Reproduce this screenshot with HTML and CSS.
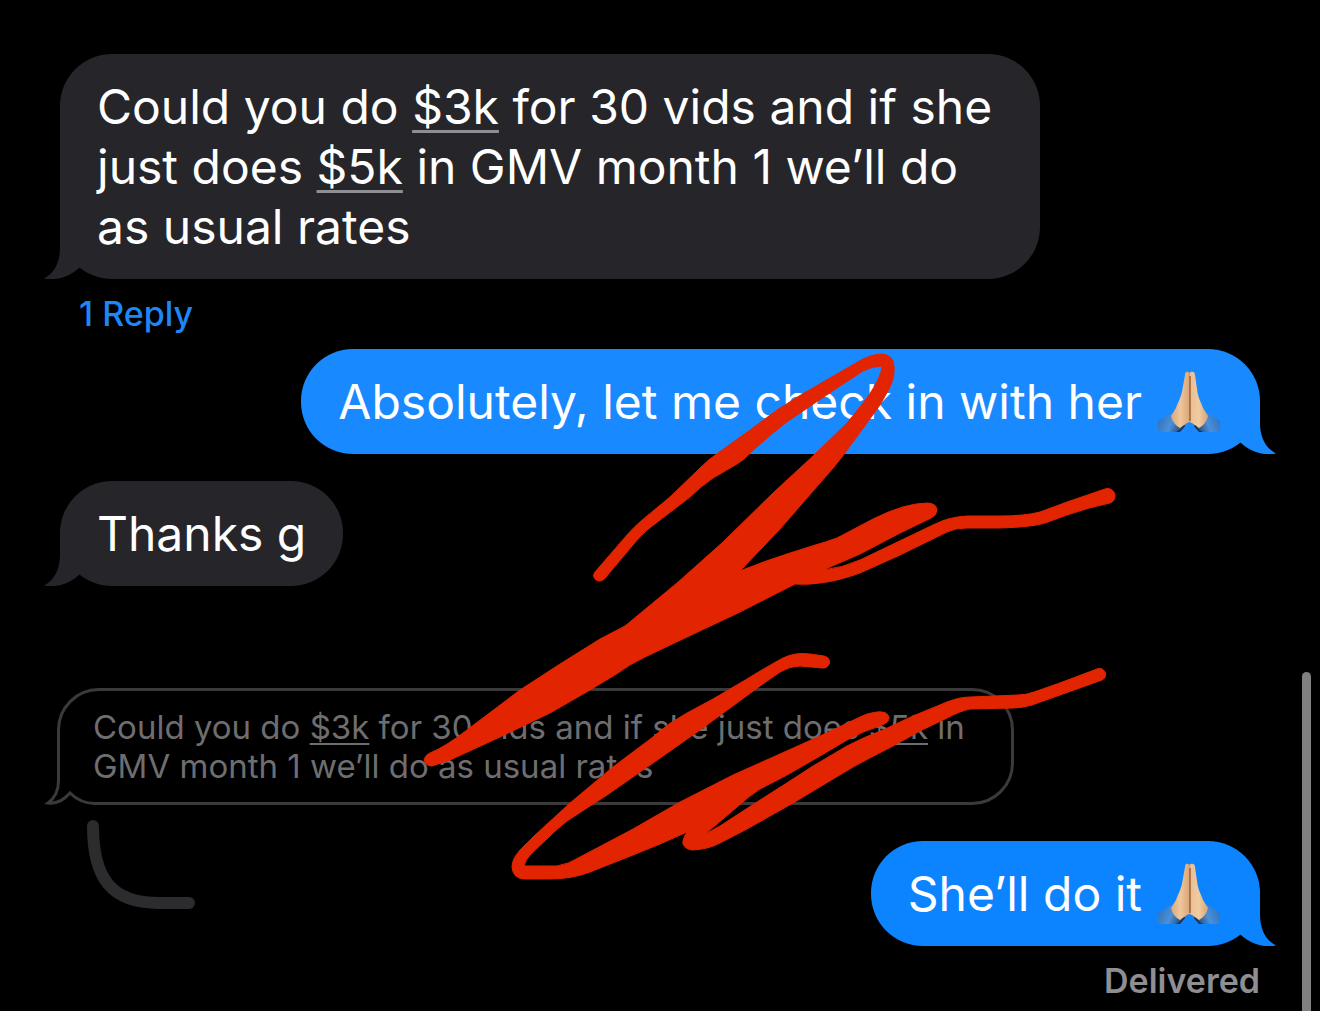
FILE: index.html
```html
<!DOCTYPE html>
<html lang="en">
<head>
    <meta charset="UTF-8">
    <meta name="viewport" content="width=device-width, initial-scale=1.0">
    <title>Messages</title>
    <link rel="stylesheet" href="styles.css">
</head>
<body>
    <!-- Shared shapes -->
    <svg class="symbols" aria-hidden="true">
        <defs>
            <linearGradient id="skin-left" x1="0" x2="1" y1="0" y2="0">
                <stop offset="0" stop-color="#d9a87c"/>
                <stop offset="0.5" stop-color="#efc69c"/>
                <stop offset="1" stop-color="#dba678"/>
            </linearGradient>
            <linearGradient id="skin-right" x1="0" x2="1" y1="0" y2="0">
                <stop offset="0" stop-color="#e9bd92"/>
                <stop offset="0.5" stop-color="#f1cba2"/>
                <stop offset="1" stop-color="#d9a577"/>
            </linearGradient>
            <linearGradient id="cuff-left" x1="0" x2="1" y1="0" y2="0.3">
                <stop offset="0" stop-color="#2d6db8"/>
                <stop offset="0.6" stop-color="#4b90da"/>
                <stop offset="1" stop-color="#26507f"/>
            </linearGradient>
            <linearGradient id="cuff-right" x1="1" x2="0" y1="0" y2="0.3">
                <stop offset="0" stop-color="#2d6db8"/>
                <stop offset="0.6" stop-color="#4b90da"/>
                <stop offset="1" stop-color="#26507f"/>
            </linearGradient>
        </defs>
        <symbol id="tail" viewBox="0 0 40 56">
            <path d="M16 0V25C16 38 11 50 0 55.500C12 58 25 54 35 45L40 40V0Z"/>
        </symbol>
        <symbol id="pray" viewBox="0 0 62 62">
            <path d="M0 50C5 47 10 44 14 42L27 55C25 58 23 60 20 61H0Z" fill="url(#cuff-left)"/>
            <path d="M62 50C57 47 53 44 49 42L36 55C38 58 40 60 43 61H62Z" fill="url(#cuff-right)"/>
            <path d="M18 61C22 59 24 57 26 53L27 55L22 61Z" fill="#1c3554"/>
            <path d="M45 61C41 59 39 57 37 53L36 55L41 61Z" fill="#1c3554"/>
            <path d="M31.500 2C30 0 27 0 27 4L24.500 18C23 27 20 31 18 37L13 45C14 50 18 55 22 57C25 55 28 52 31.500 51Z" fill="url(#skin-left)"/>
            <path d="M31.500 2C33 0 37 0 37 4L39 18C40 27 43 31 45 37L50 45C49 50 45 55 41 57C38 55 35 52 31.500 51Z" fill="url(#skin-right)"/>
            <path d="M32 5V50" stroke="#9a6238" stroke-width="1.500" fill="none"/>
        </symbol>
    </svg>

    <main class="chat">
        <div class="bubble received">
            Could you do <a href="#">$3k</a> for 30 vids and if she just does <a href="#">$5k</a> in GMV month 1 we’ll do as usual rates
            <svg class="tail" aria-hidden="true"><use href="#tail"/></svg>
        </div>
        <button class="replies" type="button">1 Reply</button>

        <div class="bubble sent">
            Absolutely, let me check in with her
            <svg class="emoji" role="img" aria-label="Folded hands"><use href="#pray"/></svg>
            <svg class="tail" aria-hidden="true"><use href="#tail"/></svg>
        </div>

        <div class="bubble received thanks">
            Thanks g
            <svg class="tail" aria-hidden="true"><use href="#tail"/></svg>
        </div>

        <blockquote class="quote">
            <svg class="quote-tail" viewBox="0 0 56 56" aria-hidden="true">
                <path class="cover" d="M12 0H56V56H12Z"/>
                <path class="line" d="M15.500 0V32C15.500 43 12 49 5 54C13 55 20 52 27 44C34 51 42 54.500 52 54.500H56"/>
            </svg>
            <p>Could you do <a href="#">$3k</a> for 30 vids and if she just does <a href="#">$5k</a> in GMV month 1 we’ll do as usual rates</p>
        </blockquote>

        <div class="thread">
            <svg class="hook" viewBox="0 0 108 90" aria-hidden="true">
                <path d="M6 6C6 58 24 83 72 83H102"/>
            </svg>
            <div class="bubble sent latest">
                She’ll do it
                <svg class="emoji" role="img" aria-label="Folded hands"><use href="#pray"/></svg>
                <svg class="tail" aria-hidden="true"><use href="#tail"/></svg>
            </div>
        </div>
        <p class="status">Delivered</p>

        <!-- Red marker scribble over the messages -->
        <svg class="marker" viewBox="0 0 1320 1011" aria-hidden="true">
            <path d="M595 572L627 535Q633 528 641 521L670 497L700 468Q709 459 718 453L750 430L777 410Q800 395 823 382L856 363Q870 354 882 354Q894 355 894 367Q895 377 889 389L880 405L845 453Q833 469 820 483L780 529L740 571Q765 561 787 554L812 546Q826 542 837 538L873 519Q905 503 928 503Q937 504 937 510Q937 515 931 518L900 533L860 554L823 570Q842 568 860 560L933 525Q948 517 967 516L1000 516Q1025 516 1040 512L1067 502L1105 489C1115 486 1119 500 1110 503Q1090 507 1067 515L1045 523Q1033 527 1000 528L967 528Q955 528 947 532L900 555L860 573Q838 581 820 583Q807 585 795 584L740 612L687 637L645 657Q630 664 618 673L590 690L550 713L500 737L450 760L432 766C424 766 421 757 430 753Q445 747 467 730L520 690L560 664L600 639L625 626L677 583L723 542L773 493L813 456L847 423L867 398Q882 376 882 366Q873 366 863 371L837 388L803 411Q787 421 773 433L750 453Q744 460 737 464L713 478Q700 487 690 497L647 530Q640 536 632 546L606 577C600 586 590 578 595 572Z"/>
            <path d="M824 656L810 654Q795 652 783 658Q768 666 747 679L713 699L687 713Q668 723 653 737L613 767L570 803L533 837L520 850Q512 859 512 867Q513 879 525 879L550 879Q572 879 590 872L633 855L660 844L687 832Q682 840 683 844Q686 850 693 850Q709 849 720 843L747 829L793 803L813 791L853 767Q873 756 893 746L920 731L947 718Q960 711 970 709L1013 708Q1022 708 1032 705L1102 680C1109 677 1105 666 1097 669L1057 684L1034 692Q1026 695 1018 695L970 697Q960 697 947 702L913 716L883 730Q864 737 847 746L813 766L793 779L757 802L720 826Q711 831 705 834L717 824L737 807Q749 796 760 789L787 775L820 756L847 740Q863 731 880 726Q890 722 889 717Q887 711 877 712Q867 713 860 717L820 736Q800 745 780 754L733 775L680 802L633 829L580 857Q569 864 557 866L524 866Q525 860 532 853L550 836Q557 829 567 821L607 795L653 763L700 730L730 708L760 686L780 672Q790 666 800 666L822 668C830 669 833 658 824 656Z"/>
        </svg>
        <div class="scrollbar"></div>
    </main>
</body>
</html>
```
FILE: styles.css
```css
* {
    box-sizing: border-box;
}

body {
    margin: 0;
    background-color: #000;
    color: #fff;
    font-family: Inter, "Liberation Sans", sans-serif;
}

.symbols {
    position: absolute;
    width: 0;
    height: 0;
}

.chat {
    position: relative;
    display: flex;
    flex-direction: column;
    min-height: 100vh;
    padding: 54px 60px 0;
    overflow: hidden;
}

/* Bubbles */
.bubble {
    position: relative;
    max-width: 980px;
    padding: 23px 37px 22px;
    border-radius: 52px;
    font-size: 48px;
    line-height: 60px;
}

.received {
    align-self: flex-start;
    background-color: #26252a;
    color: #fff;
    fill: #26252a;
}

.sent {
    display: flex;
    align-items: center;
    gap: 16px;
    align-self: flex-end;
    background-color: #1989ff;
    fill: #1989ff;
}

.latest {
    background-color: #0d84ff;
    fill: #0d84ff;
}

.bubble a,
.quote a {
    color: inherit;
    text-decoration: underline 3px #8e8e93;
    text-decoration-skip-ink: none;
    text-underline-offset: 6px;
}

.tail {
    position: absolute;
    bottom: 0;
    left: -16px;
    width: 40px;
    height: 56px;
}

.sent .tail {
    right: -16px;
    left: auto;
    transform: scaleX(-1);
}

.emoji {
    width: 62px;
    height: 62px;
    margin: -1px 3px -1px 0;
}

.replies {
    align-self: flex-start;
    height: 70px;
    padding: 0 19px;
    border: none;
    background: none;
    color: #1f86f5;
    font: 500 34px/68px Inter, sans-serif;
    cursor: pointer;
}

.thanks {
    margin-top: 27px;
}

/* Quoted message */
.quote {
    position: relative;
    align-self: flex-start;
    max-width: 957px;
    margin: 102px 0 0 -3px;
    padding: 17px 33px 16px;
    border: 3px solid #3a3a3c;
    border-radius: 42px;
    color: #6e6e70;
    font-size: 33px;
    line-height: 39px;
}

.quote p {
    position: relative;
    margin: 0;
}

.quote a {
    text-decoration: underline 2px #6e6e70;
    text-underline-offset: 4px;
}

.quote-tail {
    position: absolute;
    bottom: -3px;
    left: -17px;
    width: 56px;
    height: 56px;
    fill: none;
}

.quote-tail .cover {
    fill: #000;
}

.quote-tail .line {
    stroke: #3a3a3c;
    stroke-width: 3;
}

.thread {
    display: flex;
    align-items: flex-end;
    justify-content: space-between;
    padding-top: 36px;
}

.hook {
    width: 108px;
    height: 90px;
    margin: -21px 0 36px 27px;
    fill: none;
    stroke: #2c2c2e;
    stroke-width: 12;
    stroke-linecap: round;
}

.status {
    align-self: flex-end;
    margin: 14px 0 0;
    color: #8e8e93;
    font-size: 34px;
    font-weight: 600;
    line-height: 42px;
}

.marker {
    position: absolute;
    top: 0;
    left: 0;
    width: 100%;
    fill: #e32400;
    stroke: #e32400;
    stroke-width: 1;
    stroke-linejoin: round;
    pointer-events: none;
}

.scrollbar {
    position: absolute;
    top: 672px;
    right: 9px;
    bottom: 0;
    width: 9px;
    border-radius: 5px 5px 0 0;
    background-color: #808080;
}
```
